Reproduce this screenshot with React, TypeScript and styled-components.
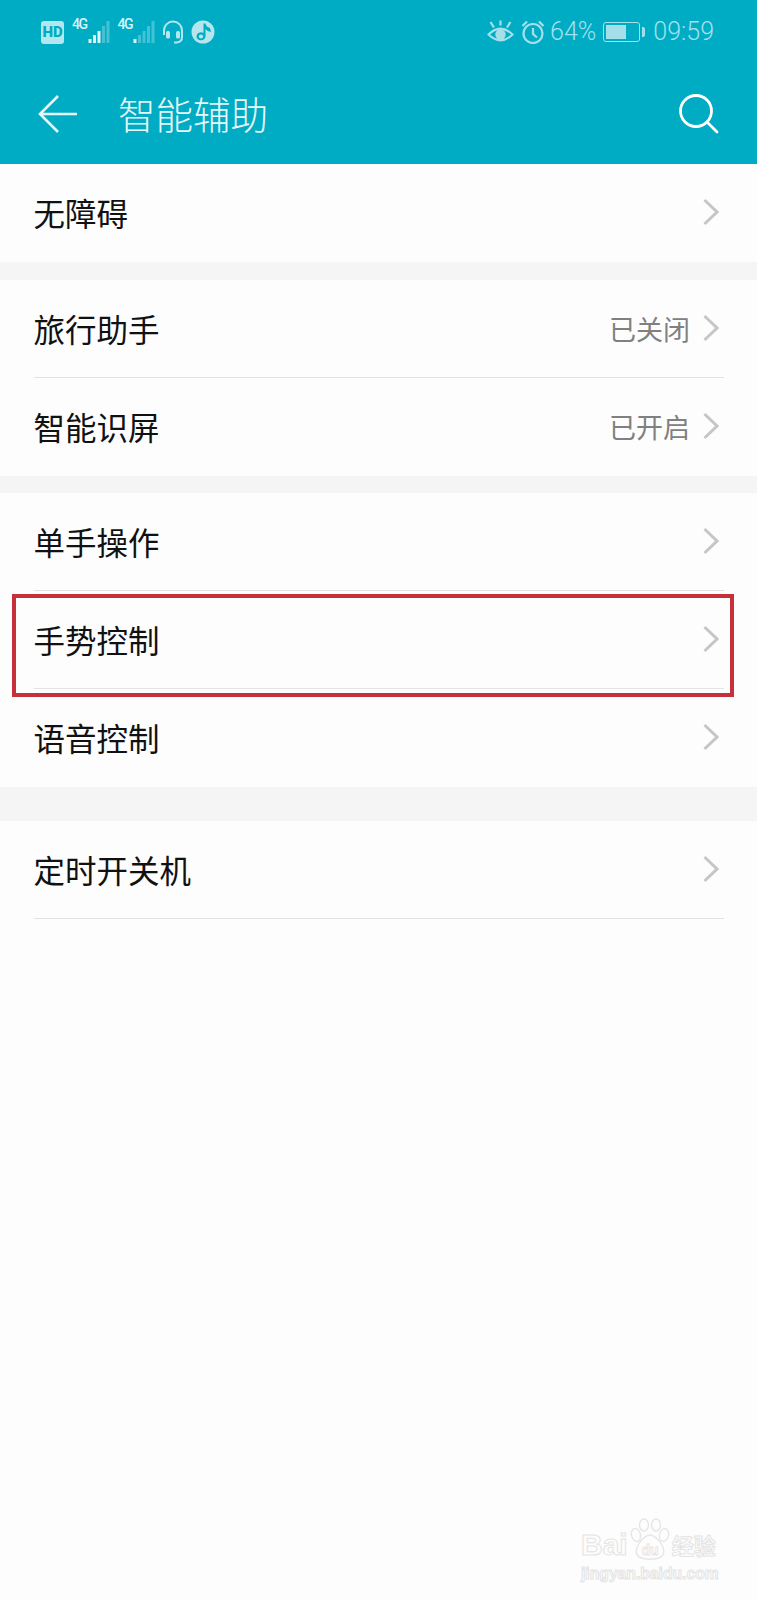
import styled, { createGlobalStyle } from "styled-components";

const GlobalStyle = createGlobalStyle`
  html, body {
    margin: 0;
    padding: 0;
    background: #fdfdfd;
  }
`;

const sections = [
  { gap: 18, rows: [{ label: "无障碍", divider: false }] },
  {
    gap: 17,
    rows: [
      { label: "旅行助手", value: "已关闭", divider: true },
      { label: "智能识屏", value: "已开启", divider: false },
    ],
  },
  {
    gap: 34,
    rows: [
      { label: "单手操作", divider: true },
      { label: "手势控制", divider: true },
      { label: "语音控制", divider: false },
    ],
  },
  { gap: 0, rows: [{ label: "定时开关机", divider: true }] },
];

const SignalBars = ({ lit, arrows }: { lit: number; arrows?: boolean }) => (
  <svg width="22" height="24" viewBox="0 0 22 24">
    {[4, 8, 12, 17, 22].map((h, i) => (
      <rect
        key={h}
        x={0.5 + i * 4.5}
        y={23 - h}
        width="3"
        height={h}
        fill="#d9f5f8"
        opacity={i < lit ? 1 : 0.3}
      />
    ))}
    {arrows && <path d="M-8 23 V17 M-4 17 V23" stroke="#d9f5f8" strokeWidth="2" opacity="0.4" />}
  </svg>
);

const Chevron = () => (
  <svg width="17" height="28" viewBox="0 0 17 28">
    <path d="M2.5 2 L15 14 L2.5 26" fill="none" stroke="#c6c6c6" strokeWidth="3" />
  </svg>
);

const App = () => {
  return (
    <Page>
      <GlobalStyle />
      <Header>
        <StatusBar>
          <StatusGroup>
            <HdBadge>HD</HdBadge>
            <Network>
              <NetworkLabel>4G</NetworkLabel>
              <SignalBars lit={3} arrows />
            </Network>
            <Network>
              <NetworkLabel>4G</NetworkLabel>
              <SignalBars lit={1} />
            </Network>
            <svg width="22" height="24" viewBox="0 0 22 24">
              <path
                d="M2 15 V10.5 a9 9 0 0 1 18 0 V17 q0 5 -5 5.5 h-3"
                fill="none"
                stroke="#b5e6ed"
                strokeWidth="2"
              />
              <rect x="4" y="11" width="4" height="7.5" rx="1.5" fill="#b5e6ed" />
              <rect x="14" y="11" width="4" height="7.5" rx="1.5" fill="#b5e6ed" />
            </svg>
            <svg width="24" height="24" viewBox="0 0 24 24">
              <circle cx="12" cy="12" r="11.5" fill="#b5e6ed" />
              <path
                d="M12.5 3.5 L14.5 3.5 Q15 7 19 8 L20 12 Q16 11.5 14.5 9 V16.5 A4.5 4 0 1 1 12.5 13 Z"
                fill="#00acc4"
              />
              <ellipse cx="10" cy="16.5" rx="2.2" ry="2" fill="#b5e6ed" />
            </svg>
          </StatusGroup>
          <StatusGroup>
            <svg width="27" height="24" viewBox="0 0 27 24">
              <path
                d="M1.5 14.5 Q13.5 3 25.5 14.5 Q13.5 26 1.5 14.5 Z"
                fill="none"
                stroke="#a5e0ea"
                strokeWidth="2.2"
              />
              <circle cx="13.5" cy="14.5" r="5.2" fill="#a5e0ea" />
              <path
                d="M3.5 2 L7 7.5 M13.5 0.5 V5.5 M23.5 2 L20 7.5"
                stroke="#a5e0ea"
                strokeWidth="2.2"
              />
            </svg>
            <svg width="24" height="24" viewBox="0 0 24 24">
              <circle cx="12" cy="13.5" r="9.5" fill="none" stroke="#a5e0ea" strokeWidth="2.2" />
              <path
                d="M12 8 V14 L16 17.5 M1.5 6 L6 1.5 M22.5 6 L18 1.5"
                fill="none"
                stroke="#a5e0ea"
                strokeWidth="2.2"
              />
            </svg>
            <Percent>64%</Percent>
            <Battery>
              <BatteryFill style={{ width: "64%" }} />
            </Battery>
            <StatusText>09:59</StatusText>
          </StatusGroup>
        </StatusBar>
        <Toolbar>
          <svg width="40" height="40" viewBox="0 0 40 40">
            <path
              d="M20 2 L2 20 L20 38 M2 20 H39"
              fill="none"
              stroke="#e6f8fa"
              strokeWidth="2.6"
            />
          </svg>
          <Title>智能辅助</Title>
          <svg width="40" height="40" viewBox="0 0 40 40">
            <circle cx="17" cy="17" r="15.5" fill="none" stroke="#ffffff" strokeWidth="2.8" />
            <path d="M28 28 L38 38" stroke="#ffffff" strokeWidth="2.8" strokeLinecap="round" />
          </svg>
        </Toolbar>
      </Header>

      {sections.map((section) => (
        <Section key={section.rows[0].label} $gap={section.gap}>
          {section.rows.map((row) => (
            <Row key={row.label} $divider={row.divider}>
              <RowLabel>{row.label}</RowLabel>
              <RowRight>
                {"value" in row && <RowValue>{row.value}</RowValue>}
                <Chevron />
              </RowRight>
            </Row>
          ))}
        </Section>
      ))}

      <Highlight />
      <Watermark>
        <WatermarkBrand>
          <span>Bai</span>
          <svg width="40" height="42" viewBox="0 0 40 42">
            <g fill="none" stroke="#e6e6e6" strokeWidth="1.4">
              <ellipse cx="6" cy="17" rx="4.5" ry="6.5" transform="rotate(-15 6 17)" />
              <ellipse cx="14" cy="7" rx="4.5" ry="6" />
              <ellipse cx="26" cy="7" rx="4.5" ry="6" />
              <ellipse cx="34" cy="17" rx="4.5" ry="6.5" transform="rotate(15 34 17)" />
              <path d="M20 17 C13 17 1 33 9 39 C15 42 25 42 31 39 C39 33 27 17 20 17 Z" />
            </g>
            <PawText x="20" y="37" textAnchor="middle">
              du
            </PawText>
          </svg>
          <span>经验</span>
        </WatermarkBrand>
        <WatermarkUrl>jingyan.baidu.com</WatermarkUrl>
      </Watermark>
    </Page>
  );
};

const Page = styled.div`
  position: relative;
  width: 757px;
  min-height: 1600px;
  background: #fdfdfd;
  font-family: "Noto Sans CJK SC", "Noto Sans", sans-serif;
  overflow: hidden;
`;

const Header = styled.header`
  height: 164px;
  background: #00acc4;
`;

const StatusBar = styled.div`
  height: 64px;
  box-sizing: border-box;
  padding: 0 43px 0 41px;
  display: flex;
  align-items: center;
  justify-content: space-between;
`;

const StatusGroup = styled.div`
  display: flex;
  align-items: center;
  gap: 7px;
`;

const HdBadge = styled.div`
  width: 23px;
  height: 23px;
  border-radius: 3px;
  background: #b5e6ed;
  color: #00acc4;
  font: 900 15px/23px "Roboto", sans-serif;
  text-align: center;
`;

const Network = styled.div`
  display: flex;
  align-items: flex-start;
  margin-left: 1px;
`;

const NetworkLabel = styled.span`
  color: #d9f5f8;
  font: 500 14px/14px "Roboto", sans-serif;
  letter-spacing: -1.5px;
  margin: -3px 1px 0 0;
`;

const StatusText = styled.span`
  color: #a0e1eb;
  font: 300 25px/30px "Roboto", sans-serif;
`;

const Percent = styled(StatusText)`
  margin-left: -2px;
`;

const Battery = styled.div`
  position: relative;
  width: 37px;
  height: 20px;
  box-sizing: border-box;
  border: 1px solid #a5e0ea;
  border-radius: 3px;
  padding: 2px;
  margin-right: 6px;

  &::after {
    content: "";
    position: absolute;
    right: -6px;
    top: 4px;
    width: 3px;
    height: 10px;
    border-radius: 0 2px 2px 0;
    background: #a5e0ea;
  }
`;

const BatteryFill = styled.div`
  height: 100%;
  background: #a5e0ea;
`;

const Toolbar = styled.div`
  height: 100px;
  box-sizing: border-box;
  padding: 0 38px 0 38px;
  display: flex;
  align-items: center;
`;

const Title = styled.h1`
  flex: 1;
  margin: 0 0 0 40px;
  padding-bottom: 2px;
  color: #e8f9fb;
  font-size: 37.5px;
  font-weight: 300;
  line-height: 50px;
`;

const Section = styled.section<{ $gap: number }>`
  background: #fdfdfd;
  border-bottom: ${(props) => props.$gap}px solid #f5f5f5;
`;

const Row = styled.div<{ $divider: boolean }>`
  height: 98px;
  margin: 0 33px 0 33.5px;
  padding-bottom: 1px;
  box-sizing: border-box;
  display: flex;
  align-items: center;
  justify-content: space-between;
  border-bottom: 1px solid ${(props) => (props.$divider ? "#e3e3e3" : "transparent")};
`;

const RowLabel = styled.span`
  color: #111;
  font-size: 31.5px;
  font-weight: 400;
`;

const RowRight = styled.div`
  display: flex;
  align-items: center;
  gap: 12px;
  padding-right: 5px;
`;

const RowValue = styled.span`
  color: #808080;
  font-size: 27px;
`;

const Highlight = styled.div`
  position: absolute;
  left: 12px;
  top: 594px;
  width: 722px;
  height: 103px;
  box-sizing: border-box;
  border: 4px solid #c6303b;
  pointer-events: none;
`;

const Watermark = styled.div`
  position: absolute;
  left: 581px;
  top: 1518px;
  width: 145px;
`;

const WatermarkBrand = styled.div`
  display: flex;
  align-items: flex-end;
  gap: 2px;
  font: 700 30px/31px "Liberation Sans", "Noto Sans CJK SC", sans-serif;
  color: #fdfdfd;
  -webkit-text-stroke: 1px #e4e4e4;

  span:last-child {
    font-size: 22px;
    line-height: 27px;
  }
`;

const PawText = styled.text`
  font: 700 14px "Liberation Sans", sans-serif;
  fill: #fdfdfd;
  stroke: #e4e4e4;
  stroke-width: 0.8px;
`;

const WatermarkUrl = styled.div`
  margin-top: 4px;
  font: 700 15.7px/20px "Liberation Sans", sans-serif;
  color: #fdfdfd;
  -webkit-text-stroke: 1px #e4e4e4;
  white-space: nowrap;
`;

export default App;
